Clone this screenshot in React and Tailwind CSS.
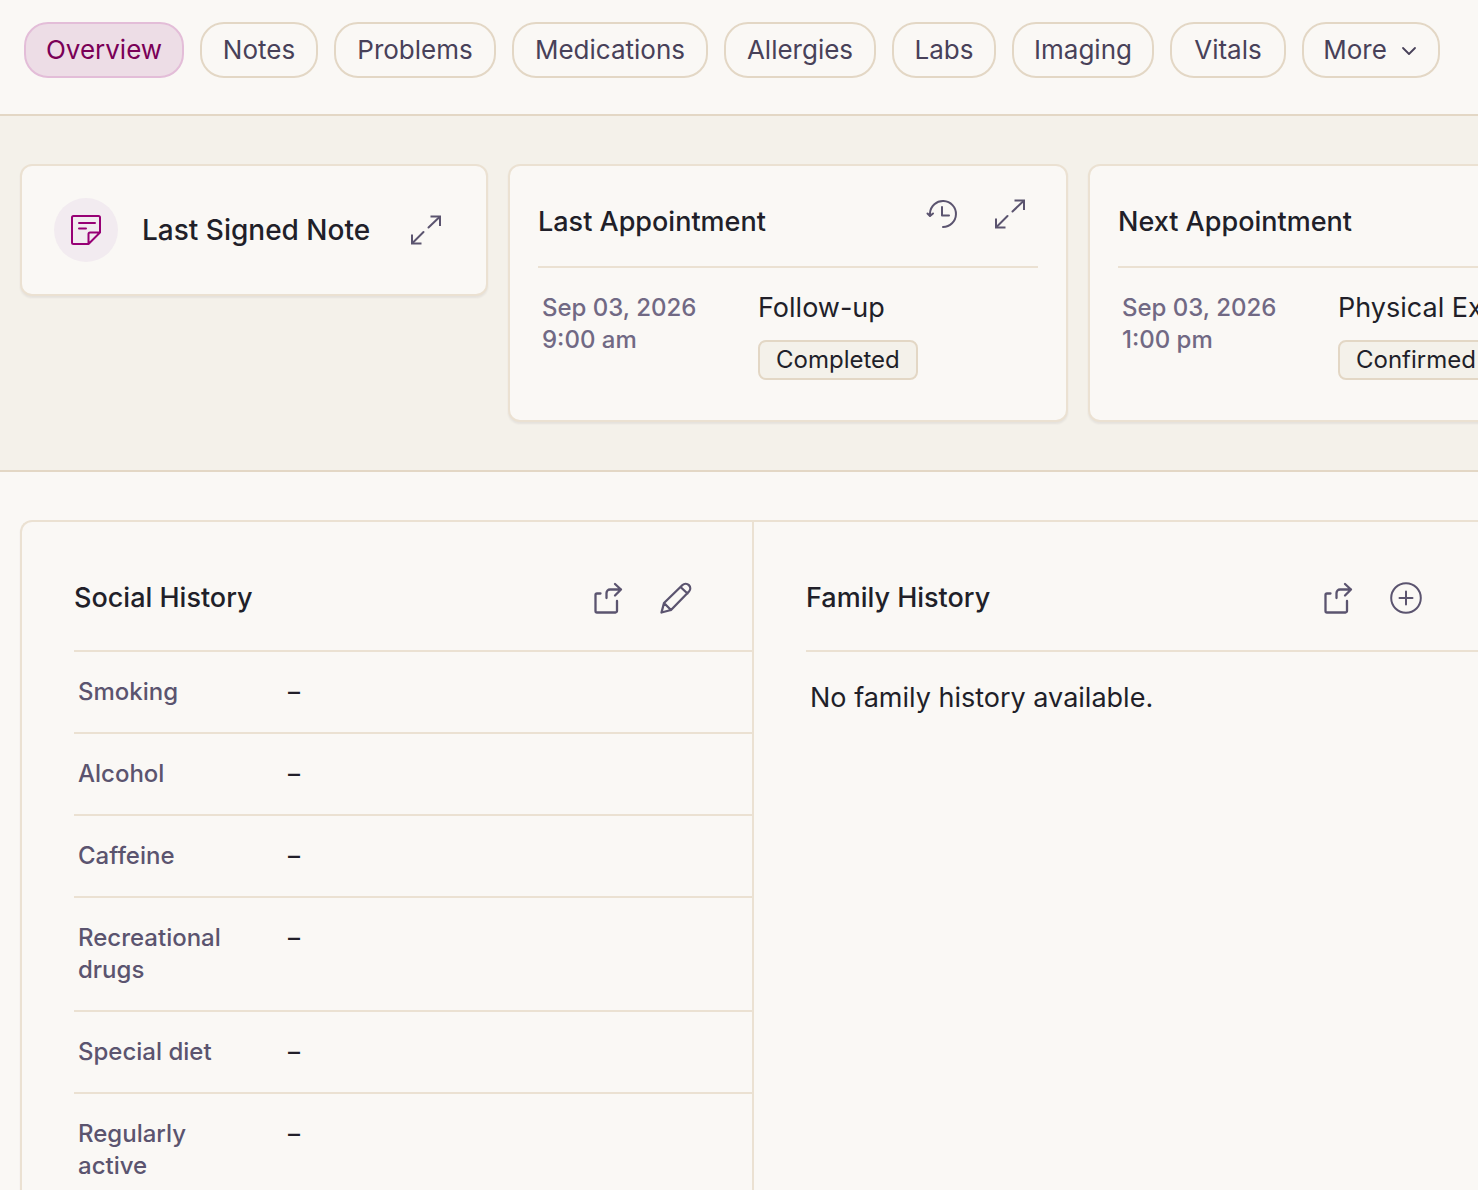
import clsx from "clsx";

const tabs = [
  { name: "Overview", width: "w-[160px]" },
  { name: "Notes", width: "w-[118px]" },
  { name: "Problems", width: "w-[162px]" },
  { name: "Medications", width: "w-[196px]" },
  { name: "Allergies", width: "w-[152px]" },
  { name: "Labs", width: "w-[104px]" },
  { name: "Imaging", width: "w-[142px]" },
  { name: "Vitals", width: "w-[116px]" },
  { name: "More", width: "w-[138px]", menu: true },
];

const socialHistory = [
  { label: "Smoking", value: "–" },
  { label: "Alcohol", value: "–" },
  { label: "Caffeine", value: "–" },
  { label: "Recreational drugs", value: "–" },
  { label: "Special diet", value: "–" },
  { label: "Regularly active", value: "–" },
];

function Icon({ children, className }) {
  return (
    <svg
      viewBox="0 0 32 32"
      fill="none"
      stroke="currentColor"
      strokeWidth="2.3"
      strokeLinecap="round"
      strokeLinejoin="round"
      aria-hidden="true"
      className={clsx("size-8 shrink-0", className)}
    >
      {children}
    </svg>
  );
}

function NoteIcon() {
  return (
    <Icon>
      <path
        strokeWidth="2"
        d="M18.5 30H3.5A1.5 1.5 0 0 1 2 28.5V3.5A1.5 1.5 0 0 1 3.5 2H28.5A1.5 1.5 0 0 1 30 3.5V18.5L18.5 30V20A1.5 1.5 0 0 1 20 18.5H30"
      />
      <path strokeWidth="2" d="M9 9H25M9 14.5H16" />
    </Icon>
  );
}

function ExpandIcon() {
  return (
    <Icon>
      <path strokeLinecap="square" strokeLinejoin="miter" strokeWidth="2" d="M21.5 2.5H30V11M2 21.5V29.5H10.500" />
      <path strokeWidth="2" d="M29.5 3L18.5 13.5M13.5 18L2.5 29" />
    </Icon>
  );
}

function HistoryIcon() {
  return (
    <Icon>
      <path strokeWidth="2" d="M4 17.5V15A13 13 0 1 1 17 29" />
      <path strokeWidth="2" d="M1.500 15.5L4 18L7 15.5M16 9V17.5H23" />
    </Icon>
  );
}

function ShareIcon() {
  return (
    <Icon>
      <path d="M8.5 11.5H5A1.5 1.5 0 0 0 3.5 13V29A1.5 1.5 0 0 0 5 30.5H23.5A1.5 1.5 0 0 0 25 29V19" />
      <path d="M14.5 16V11A3.5 3.5 0 0 1 18 7.5H29M23 2L29 7.5L23 13.5" />
    </Icon>
  );
}

function PencilIcon() {
  return (
    <Icon>
      <path d="M1.5 30.5L4 21L22.5 3A4.6 4.6 0 0 1 29 9.5L11 28L1.5 30.5ZM4 21L11 28M20.5 5L27.5 11.5" />
    </Icon>
  );
}

function AddIcon() {
  return (
    <Icon>
      <circle cx="16" cy="16" r="14.8" strokeWidth="2" />
      <path strokeWidth="2" d="M16 9.5V22.5M9.5 16H22.5" />
    </Icon>
  );
}

function IconButton({ label, children }) {
  return (
    <button type="button" aria-label={label} className="size-8 shrink-0 text-[#5b546f]">
      {children}
    </button>
  );
}

function AppointmentCard({ title, date, time, type, status }) {
  return (
    <article className="w-[560px] shrink-0 rounded-xl border-2 border-[#ebe1d2] bg-[#faf8f5] px-7 shadow-[0_2px_2px_rgba(60,40,60,0.07)]">
      <header className="flex items-start justify-between border-b-2 border-[#ebe1d2] pt-8 pr-3 pb-5">
        <h2 className="text-[27px] leading-[48px] font-medium">{title}</h2>
        <div className="flex gap-9">
          <IconButton label="Appointment history">
            <HistoryIcon />
          </IconButton>
          <IconButton label="Expand">
            <ExpandIcon />
          </IconButton>
        </div>
      </header>
      <div className="flex px-1 pt-6 pb-10">
        <p className="w-[216px] shrink-0 text-2xl leading-8 font-medium text-[#716984]">
          {date}
          <br />
          {time}
        </p>
        <div className="flex flex-col items-start gap-4">
          <p className="text-[27px] leading-8">{type}</p>
          <span className="rounded-lg border-2 border-[#e3d7c5] bg-[#f4f1ea] px-4 text-2xl leading-9">
            {status}
          </span>
        </div>
      </div>
    </article>
  );
}

function HistoryPanel({ title, action, children }) {
  return (
    <section className="border-r-2 border-[#ebe1d2] pl-[52px]">
      <header className="flex items-center justify-between border-b-2 border-[#ebe1d2] pt-[60px] pr-[60px] pb-9">
        <h2 className="text-[27px] leading-8 font-medium">{title}</h2>
        <div className="flex gap-9">
          <IconButton label={`Share ${title}`}>
            <ShareIcon />
          </IconButton>
          {action}
        </div>
      </header>
      {children}
    </section>
  );
}

function App() {
  return (
    <div className="h-screen overflow-hidden bg-[#faf8f5] font-[Inter,'Noto_Sans',sans-serif] text-[#211f29]">
      <nav className="flex gap-4 px-6 pt-[22px] pb-9">
        {tabs.map((tab) => (
          <button
            key={tab.name}
            type="button"
            className={clsx(
              "flex h-14 shrink-0 items-center justify-center gap-3 rounded-3xl border-2 text-[26px] leading-8",
              tab.width,
              tab.name === "Overview"
                ? "border-[#e3bdd8] bg-[#eddde6] text-[#7a0057]"
                : "border-[#e3d7c5] text-[#484159]"
            )}
          >
            {tab.name}
            {tab.menu && (
              <svg viewBox="0 0 20 20" fill="none" aria-hidden="true" className="size-5 shrink-0">
                <path
                  d="M4 8L10 14L16 8"
                  stroke="currentColor"
                  strokeWidth="1.8"
                  strokeLinecap="round"
                  strokeLinejoin="round"
                />
              </svg>
            )}
          </button>
        ))}
      </nav>

      <div className="flex items-start gap-5 overflow-hidden border-y-2 border-[#e3d7c5] bg-[#f4f1ea] py-12 pl-5">
        <article className="flex w-[468px] shrink-0 items-center rounded-xl border-2 border-[#ebe1d2] bg-[#faf8f5] py-8 pr-11 pl-8 shadow-[0_2px_2px_rgba(60,40,60,0.07)]">
          <div className="flex size-16 shrink-0 items-center justify-center rounded-full bg-[#f2ebf0] text-[#970075]">
            <NoteIcon />
          </div>
          <h2 className="ml-6 flex-1 text-[28px] leading-9 font-medium whitespace-nowrap">
            Last Signed Note
          </h2>
          <IconButton label="Expand">
            <ExpandIcon />
          </IconButton>
        </article>
        <AppointmentCard
          title="Last Appointment"
          date="Sep 03, 2026"
          time="9:00 am"
          type="Follow-up"
          status="Completed"
        />
        <AppointmentCard
          title="Next Appointment"
          date="Sep 03, 2026"
          time="1:00 pm"
          type="Physical Exam"
          status="Confirmed"
        />
      </div>

      <main className="mt-12 -mr-1.5 ml-5 grid grid-cols-[366fr_365fr] rounded-tl-xl border-t-2 border-l-2 border-[#ebe1d2] shadow-[0_2px_2px_rgba(60,40,60,0.07)]">
        <HistoryPanel
          title="Social History"
          action={
            <IconButton label="Edit Social History">
              <PencilIcon />
            </IconButton>
          }
        >
          <dl>
            {socialHistory.map((item) => (
              <div
                key={item.label}
                className="flex border-b-2 border-[#ebe1d2] px-1 py-6 text-2xl leading-8 font-medium"
              >
                <dt className="w-[210px] shrink-0 pr-9 text-[#5b546f]">{item.label}</dt>
                <dd>{item.value}</dd>
              </div>
            ))}
          </dl>
        </HistoryPanel>
        <HistoryPanel
          title="Family History"
          action={
            <IconButton label="Add Family History">
              <AddIcon />
            </IconButton>
          }
        >
          <p className="px-1 py-7 text-[27px] leading-9">No family history available.</p>
        </HistoryPanel>
      </main>
    </div>
  );
}

export default App;
